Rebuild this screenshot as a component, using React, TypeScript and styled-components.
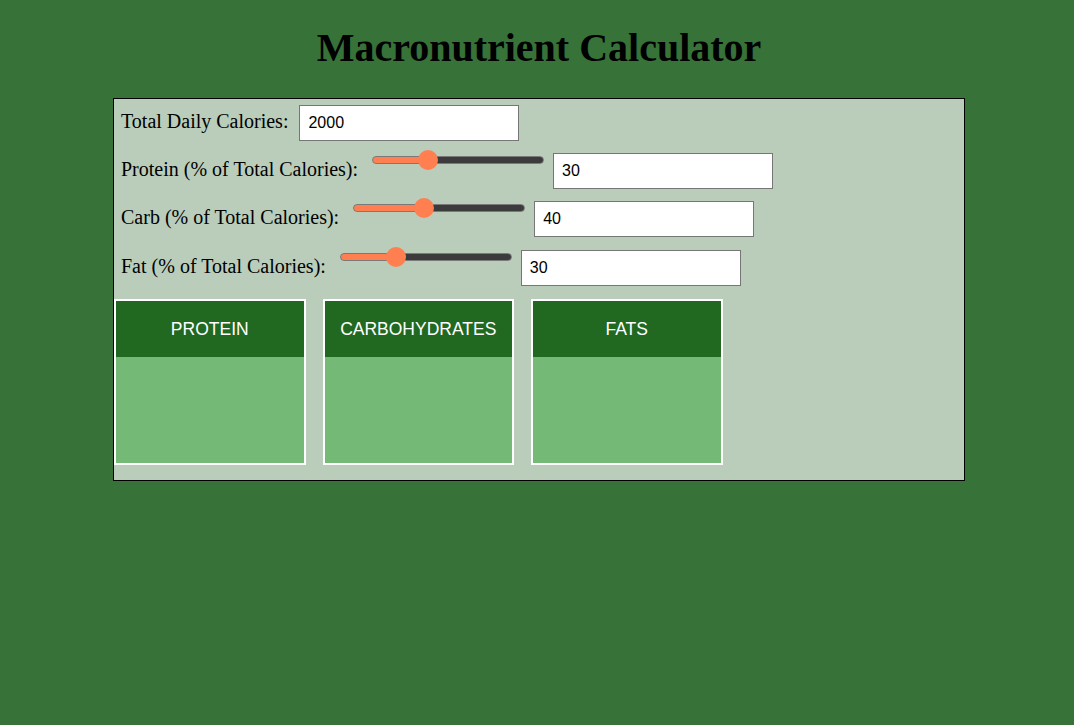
import React, { useState } from "react";
import styled, { createGlobalStyle } from "styled-components";

const GlobalStyle = createGlobalStyle`
  html, body {
    margin: 0;
    padding: 0;
    background-color: #377238;
    font-family: "Liberation Serif", "Times New Roman", serif;
  }
`;

const Page = styled.div`
  width: 852px;
  margin-left: 113px;
  padding-bottom: 40px;
`;

const Title = styled.h1`
  margin: 24px 0 27px;
  font-size: 40px;
  font-weight: bold;
  text-align: center;
  color: #000;
`;

const Panel = styled.div`
  border: 1px solid #000;
  background-color: #bacdba;
  padding-bottom: 15px;
`;

const Form = styled.div`
  display: flex;
  flex-direction: column;
  gap: 12px;
  padding: 6px 7px 13px;
`;

const Row = styled.div<{ $nudge?: number }>`
  display: flex;
  align-items: center;
  margin-top: ${(p) => p.$nudge ?? 0}px;
`;

const Label = styled.label<{ $gap: number }>`
  font-size: 20px;
  color: #000;
  margin-right: ${(p) => p.$gap}px;
  margin-bottom: 4px;
`;

const THUMB = 20;
const TRACK_W = 172;

const Slider = styled.input`
  -webkit-appearance: none;
  appearance: none;
  align-self: flex-start;
  box-sizing: border-box;
  width: ${TRACK_W}px;
  height: 8px;
  margin: 3px 9px 0 0;
  border: 1px solid #7a7a7a;
  border-radius: 4px;
  outline: none;

  &::-webkit-slider-thumb {
    -webkit-appearance: none;
    appearance: none;
    width: ${THUMB}px;
    height: ${THUMB}px;
    border-radius: 50%;
    background: #ff7f50;
    border: none;
    cursor: pointer;
  }

  &::-moz-range-thumb {
    width: ${THUMB}px;
    height: ${THUMB}px;
    border-radius: 50%;
    background: #ff7f50;
    border: none;
  }
`;

const NumberBox = styled.input`
  box-sizing: border-box;
  width: 220px;
  height: 36px;
  padding: 0 8px;
  border: 1px solid #767676;
  background: #fff;
  font-family: "Liberation Sans", Arial, sans-serif;
  font-size: 16px;
  color: #000;
`;

const Cards = styled.div`
  display: flex;
  gap: 17px;
`;

const Card = styled.div`
  width: 191.5px;
  height: 166px;
  box-sizing: border-box;
  border: 2px solid #fff;
  display: flex;
  flex-direction: column;
  background-color: #75b977;
`;

const CardHeader = styled.div`
  height: 56px;
  display: flex;
  align-items: center;
  justify-content: center;
  background-color: #216921;
  color: #fff;
  font-family: "Liberation Sans", Arial, sans-serif;
  font-size: 17.5px;
  text-transform: uppercase;
`;

type Macro = { key: string; label: string; nudge?: number };

const macros: Macro[] = [
  { key: "protein", label: "Protein (% of Total Calories):" },
  { key: "carb", label: "Carb (% of Total Calories):" },
  { key: "fat", label: "Fat (% of Total Calories):", nudge: 1 },
];

const fillFor = (value: string) => {
  const p = Math.min(100, Math.max(0, Number(value) || 0)) / 100;
  const inner = TRACK_W - 2;
  const stop = ((THUMB / 2 + p * (inner - THUMB)) / inner) * 100;
  return `linear-gradient(to right, #ff7f50 ${stop}%, #3b3b3b ${stop}%)`;
};

const App: React.FC = () => {
  const [calories, setCalories] = useState("2000");
  const [values, setValues] = useState<Record<string, string>>({
    protein: "30",
    carb: "40",
    fat: "30",
  });

  const update = (key: string, v: string) =>
    setValues((prev) => ({ ...prev, [key]: v }));

  return (
    <>
      <GlobalStyle />
      <Page>
        <Title>Macronutrient Calculator</Title>
        <Panel>
          <Form>
            <Row>
              <Label $gap={11}>Total Daily Calories:</Label>
              <NumberBox
                type="text"
                value={calories}
                onChange={(e) => setCalories(e.target.value)}
              />
            </Row>
            {macros.map((m) => (
              <Row key={m.key} $nudge={m.nudge}>
                <Label $gap={14}>{m.label}</Label>
                <Slider
                  type="range"
                  min={0}
                  max={100}
                  value={values[m.key]}
                  onChange={(e) => update(m.key, e.target.value)}
                  style={{ background: fillFor(values[m.key]) }}
                />
                <NumberBox
                  type="text"
                  value={values[m.key]}
                  onChange={(e) => update(m.key, e.target.value)}
                />
              </Row>
            ))}
          </Form>
          <Cards>
            <Card>
              <CardHeader>Protein</CardHeader>
            </Card>
            <Card>
              <CardHeader>Carbohydrates</CardHeader>
            </Card>
            <Card>
              <CardHeader>Fats</CardHeader>
            </Card>
          </Cards>
        </Panel>
      </Page>
    </>
  );
};

export default App;
